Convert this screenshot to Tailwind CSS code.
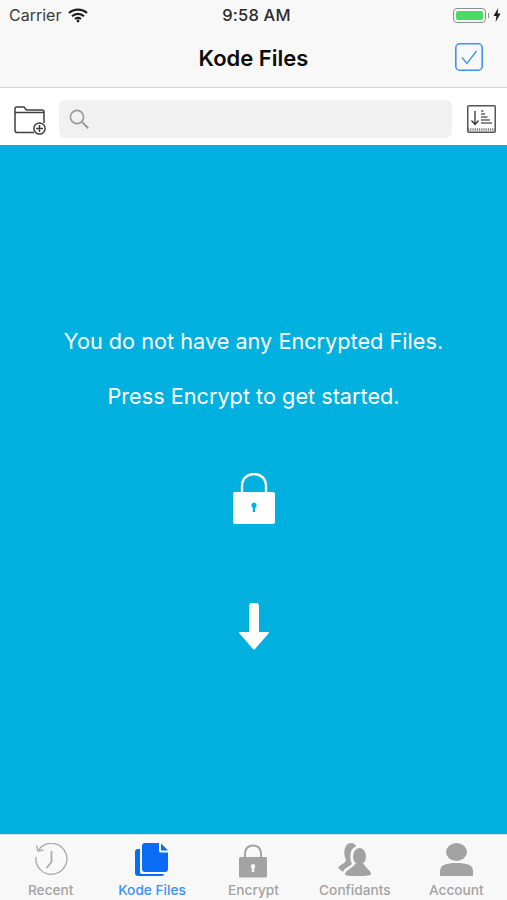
<!DOCTYPE html>
<html lang="en">
<head>
  <meta charset="UTF-8" />
  <meta name="viewport" content="width=device-width, initial-scale=1.0" />
  <title>Kode Files</title>
  <script src="https://cdn.jsdelivr.net/npm/@tailwindcss/browser@4"></script>
</head>
<body class="bg-white font-['Inter',sans-serif]">
  <div class="w-[507px] h-[900px] flex flex-col overflow-hidden">
    <!-- status + nav -->
    <header class="h-[88px] shrink-0 bg-[#f8f8f8] border-b border-[#d4d4d4]">
      <div class="h-[30px] grid grid-cols-3 items-center pl-[9px] pr-[6px] text-[16px] leading-none text-[#2a2a2a]">
        <div class="flex items-center gap-[7px]">
          <span class="text-[#3c3c3c]">Carrier</span>
          <svg class="w-[20px] h-[15px]" viewBox="0 0 20 15" fill="none" stroke="#1c1c1c" stroke-width="2.2">
            <path d="M1 5 C6 0.4 14 0.4 19 5" />
            <path d="M4 8.2 C7.5 5 12.5 5 16 8.2" />
            <path d="M7 11 C9 9.4 11 9.4 13 11" />
            <circle cx="10" cy="13" r="1.4" fill="#1c1c1c" stroke="none" />
          </svg>
        </div>
        <div class="text-center font-medium text-[16.5px] tracking-[0.2px] pl-[3px]">9:58 AM</div>
        <div class="flex items-center justify-end gap-[2px]">
          <div class="w-[33px] h-[15px] rounded-[4px] border border-[#8e8e8e] p-[2px]">
            <div class="w-full h-full rounded-[2px] bg-[#4cd964]"></div>
          </div>
          <div class="w-[1px] h-[5px] bg-[#8e8e8e]"></div>
          <svg class="w-[8px] h-[14px] ml-[2px]" viewBox="0 0 8 14" fill="#1c1c1c"><path d="M5.2 0 L0.5 8 H3.4 L2.6 14 L7.6 5.6 H4.6 Z" /></svg>
        </div>
      </div>
      <div class="h-[57px] grid grid-cols-[1fr_auto_1fr] items-center pl-[24px] pr-[24px]">
        <div></div>
        <h1 class="text-[22px] font-semibold text-[#0c0c0c] leading-none mb-[2px]">Kode Files</h1>
        <div class="flex justify-end">
          <svg class="w-[28px] h-[28px] mb-[4px]" viewBox="0 0 28 28" fill="none" stroke="#3f90f2" stroke-width="1.6">
            <rect x="0.8" y="0.8" width="26.4" height="26.4" rx="4" />
            <path d="M7 14.5 L12 20.5 L21.5 8" stroke-width="1.3" />
          </svg>
        </div>
      </div>
    </header>

    <!-- search row -->
    <div class="h-[57px] shrink-0 bg-white flex items-center pt-[5px] pl-[14px] pr-[10px]">
      <svg class="w-[33px] h-[30px] shrink-0 mt-[2px]" viewBox="0 0 33 30" fill="none" stroke="#3f3f3f" stroke-width="1.5">
        <path d="M1 25 V3.5 Q1 2 2.5 2 H10 L12.5 5 H28 Q30 5 30 7 V18" />
        <path d="M1 7.5 H30" />
        <path d="M20 27.5 H3 Q1 27.5 1 25" />
        <circle cx="25.5" cy="23.5" r="5.6" fill="#fff" />
        <path d="M25.5 20 V27 M22 23.5 H29" />
      </svg>
      <div class="ml-[12px] w-[393px] h-[38px] rounded-[6px] bg-[#f1f1f1] flex items-center pl-[10px]">
        <svg class="w-[20px] h-[20px]" viewBox="0 0 20 20" fill="none" stroke="#9a9a9a" stroke-width="1.6">
          <circle cx="8" cy="8" r="6.6" />
          <path d="M13 13 L19.2 19.2" stroke-width="2" />
        </svg>
      </div>
      <svg class="ml-[15px] w-[29px] h-[28px] shrink-0" viewBox="0 0 29 28" fill="none" stroke="#555">
        <rect x="0.75" y="0.75" width="27.5" height="26.5" rx="1" stroke-width="1.5" />
        <path d="M1 24.5 H28" stroke-width="2.6" stroke-dasharray="1.2 1" stroke="#777" />
        <path d="M8 6 V19 M4.5 15.5 L8 19.5 L11.5 15.5" stroke-width="1.3" stroke="#333" />
        <path d="M14 6 H16.5 M14 9 H18 M14 12 H20.5 M14 15 H23 M14 18 H25" stroke-width="1.5" stroke="#666" />
      </svg>
    </div>

    <!-- message panel -->
    <main class="flex-1 bg-[#00b0df] flex flex-col items-center pt-[183px] text-white text-[21.7px] leading-[27px]">
      <p>You do not have any Encrypted Files.</p>
      <p class="mt-[28px]">Press Encrypt to get started.</p>
      <svg class="mt-[63px] w-[42px] h-[51px]" viewBox="0 0 42 51" fill="#fff">
        <path d="M9 21 V13 C9 -3 33 -3 33 13 V21" fill="none" stroke="#fff" stroke-width="2.4" />
        <path fill-rule="evenodd" d="M2 19 H40 Q42 19 42 21 V49 Q42 51 40 51 H2 Q0 51 0 49 V21 Q0 19 2 19 Z M21 29.500 A3 3 0 0 0 19.800 35 L19.800 39 H22.200 L22.200 35 A3 3 0 0 0 21 29.500 Z" />
      </svg>
      <svg class="mt-[79px] w-[30px] h-[47px]" viewBox="0 0 30 47" fill="#fff">
        <path d="M10 3 Q10 0 13 0 H17 Q20 0 20 3 V29 H29 Q30.500 29 29.500 30.500 L16 46 Q15 47 14 46 L0.500 30.500 Q-0.500 29 1 29 H10 Z" />
      </svg>
    </main>

    <!-- tab bar -->
    <nav class="h-[66px] shrink-0 bg-[#f8f8f8] border-t border-[#d9dde0] grid grid-cols-5 text-[13.7px] leading-none font-medium text-[#a3a3a3]">
      <div class="flex flex-col items-center">
        <svg class="w-[34px] h-[36px] mt-[8px]" viewBox="0 0 34 36" fill="none" stroke="#a8a8a8" stroke-width="1.3">
          <path d="M5 6.500 A15.500 15.500 0 1 1 2 14" />
          <path d="M2.500 2.500 L4 8 L9.500 7" />
          <path d="M17.500 8 V19 L12.500 25" stroke-width="1.7" />
        </svg>
        <span class="mt-[5px]">Recent</span>
      </div>
      <div class="flex flex-col items-center text-[#3f8ff0]">
        <svg class="w-[34px] h-[34px] mt-[8px] mb-[2px]" viewBox="0 0 34 34" fill="#0a6cf5">
          <path d="M3 6 H5 V29 Q5 31 7 31 H29 V31 Q29 33 27 33 H3 Q0 33 0 30 V9 Q0 6 3 6 Z" />
          <path d="M10 0 H24 V8 Q24 9.500 25.500 9.500 H33 V26 Q33 29 30 29 H10 Q7 29 7 26 V3 Q7 0 10 0 Z" />
          <path d="M26 0.500 L33 7.500 H26 Z" />
        </svg>
        <span class="mt-[5px]">Kode Files</span>
      </div>
      <div class="flex flex-col items-center">
        <svg class="w-[28px] h-[34px] mt-[9px] mb-[1px]" viewBox="0 0 28 34" fill="#a3a3a3">
          <path d="M6 14 V9 C6 -1 22 -1 22 9 V14" fill="none" stroke="#a3a3a3" stroke-width="2" />
          <path fill-rule="evenodd" d="M1.500 13 H26.500 Q28 13 28 14.500 V32 Q28 33.500 26.500 33.500 H1.500 Q0 33.500 0 32 V14.500 Q0 13 1.500 13 Z M14 20 A2.500 2.500 0 0 0 12.800 24.500 L12.800 28 H15.200 L15.200 24.500 A2.500 2.500 0 0 0 14 20 Z" />
        </svg>
        <span class="mt-[5px]">Encrypt</span>
      </div>
      <div class="flex flex-col items-center">
        <svg class="w-[34px] h-[34px] mt-[8px] mb-[2px]" viewBox="0 0 34 34" fill="#a3a3a3">
          <ellipse cx="21.500" cy="13.500" rx="6.500" ry="8.500" />
          <path d="M7 31.500 C7 27 14 26 17 21 H26 C28 26 33 27 33 31 Q33 33 20 33 Q7 33 7 31.500 Z" />
          <path d="M0 25 C2 21 7 21 8 17 C5 11 6 0 13 0 C16 0 18 2 18 3.500 C12 5 11 15 14 21 C11 24 6 25 5 29 Z" />
        </svg>
        <span class="mt-[5px]">Confidants</span>
      </div>
      <div class="flex flex-col items-center">
        <svg class="w-[33px] h-[33px] mt-[8px] mb-[3px]" viewBox="0 0 33 33" fill="#a3a3a3">
          <ellipse cx="16.500" cy="9" rx="10.500" ry="9" />
          <path d="M0 33 V28 C0 22 6 20 16.500 20 C27 20 33 22 33 28 V33 Z" />
        </svg>
        <span class="mt-[5px]">Account</span>
      </div>
    </nav>
  </div>
</body>
</html>
